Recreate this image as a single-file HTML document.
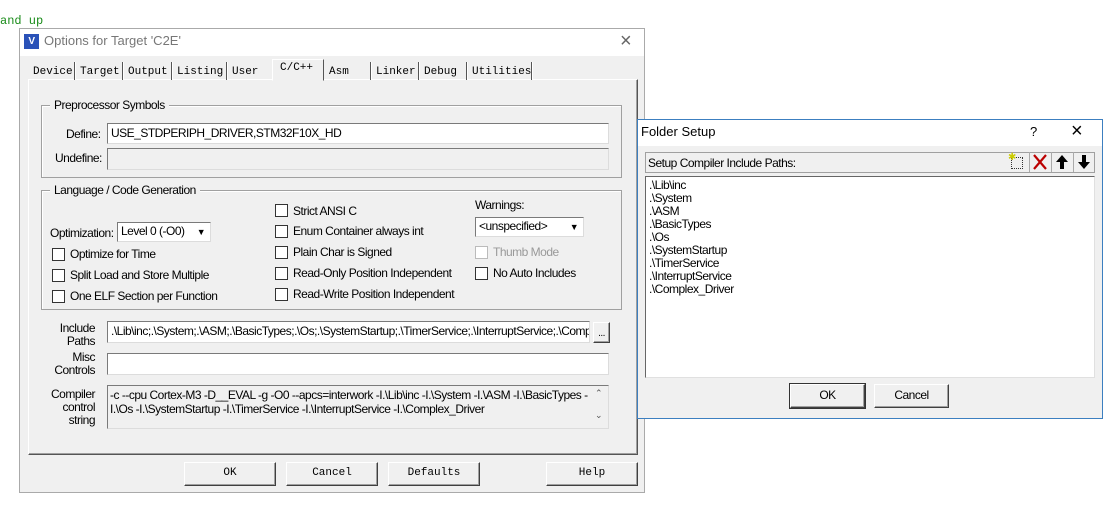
<!DOCTYPE html>
<html><head><meta charset="utf-8"><style>
*{box-sizing:border-box;margin:0;padding:0}
body{width:1116px;height:526px;background:#fff;position:relative;overflow:hidden;font-family:"Liberation Sans",sans-serif;font-size:12px;color:#000;letter-spacing:-0.5px}
.a{position:absolute;white-space:nowrap}
.mono{font-family:"Liberation Mono",monospace;font-size:11px;letter-spacing:0}
.in{position:absolute;background:#fff;border:1px solid #7a7a7a;border-right-color:#dcdcdc;border-bottom-color:#dcdcdc;padding:1px 3px;line-height:16px;overflow:hidden;white-space:nowrap}
.dis{background:#f0f0f0}
.grp{position:absolute;border:1px solid #a0a0a0;box-shadow:inset 1px 1px 0 #fff}
.gl{position:absolute;top:-8px;left:8px;background:#f0f0f0;padding:0 4px}
.cb{position:absolute;width:13px;height:13px;border:1px solid #333;background:#fff}
.btn{position:absolute;background:#f0f0f0;border:1px solid;border-color:#fff #404040 #404040 #fff;box-shadow:inset -1px -1px 0 #a0a0a0;text-align:center;line-height:21px}
.tab{position:absolute;top:62px;height:18px;line-height:20px;border-right:1px solid #555;box-shadow:1px 0 0 #fff;padding-left:4px}
</style></head><body>
<div class="a mono" style="left:0;top:14px;color:#1a8c1a;font-size:12px">and up</div>

<div class="a" style="left:19px;top:28px;width:626px;height:465px;background:#f0f0f0;border:1px solid #aaa"></div>
<div class="a" style="left:20px;top:29px;width:624px;height:27px;background:#fff"></div>
<div class="a" style="left:24px;top:34px;width:15px;height:15px;background:#2a52b8;color:#fff;font-size:10px;font-weight:bold;text-align:center;line-height:15px">V</div>
<div class="a" style="left:44px;top:33px;font-size:13px;color:#777;letter-spacing:0">Options for Target 'C2E'</div>
<div class="a" style="left:620px;top:30px;font-size:20px;color:#666;font-weight:200">×</div>

<div class="a" style="left:28px;top:79px;width:610px;height:376px;border:1px solid;border-color:#fff #555 #555 #fff;box-shadow:inset -1px -1px 0 #a0a0a0"></div>
<div class="tab mono" style="left:29px;width:46px">Device</div>
<div class="tab mono" style="left:76px;width:47px">Target</div>
<div class="tab mono" style="left:124px;width:48px">Output</div>
<div class="tab mono" style="left:173px;width:54px">Listing</div>
<div class="tab mono" style="left:228px;width:45px;border-right:none;box-shadow:none">User</div>
<div class="a mono" style="left:272px;top:59px;width:52px;height:22px;background:#f0f0f0;border:1px solid;border-color:#fff #555 transparent #fff;padding-left:7px;line-height:17px">C/C++</div>
<div class="tab mono" style="left:325px;width:46px">Asm</div>
<div class="tab mono" style="left:372px;width:47px">Linker</div>
<div class="tab mono" style="left:420px;width:47px">Debug</div>
<div class="tab mono" style="left:468px;width:64px">Utilities</div>

<div class="grp" style="left:41px;top:105px;width:581px;height:73px"><span class="gl">Preprocessor Symbols</span></div>
<div class="a" style="left:66px;top:127px">Define:</div>
<div class="in" style="left:107px;top:123px;width:502px;height:21px">USE_STDPERIPH_DRIVER,STM32F10X_HD</div>
<div class="a" style="left:55px;top:151px">Undefine:</div>
<div class="in dis" style="left:107px;top:148px;width:502px;height:22px"></div>

<div class="grp" style="left:41px;top:190px;width:581px;height:120px"><span class="gl">Language / Code Generation</span></div>
<div class="a" style="left:50px;top:226px">Optimization:</div>
<div class="in" style="left:117px;top:222px;width:94px;height:20px;padding-top:0">Level 0 (-O0)</div>
<div class="a" style="left:193px;top:224px;width:16px;height:16px;background:#fff;font-size:9px;text-align:center;line-height:16px">▼</div>
<div class="cb" style="left:52px;top:248px"></div><div class="a" style="left:70px;top:247px">Optimize for Time</div>
<div class="cb" style="left:52px;top:269px"></div><div class="a" style="left:70px;top:268px">Split Load and Store Multiple</div>
<div class="cb" style="left:52px;top:290px"></div><div class="a" style="left:70px;top:289px">One ELF Section per Function</div>

<div class="cb" style="left:275px;top:204px"></div><div class="a" style="left:293px;top:204px">Strict ANSI C</div>
<div class="cb" style="left:275px;top:225px"></div><div class="a" style="left:293px;top:224px">Enum Container always int</div>
<div class="cb" style="left:275px;top:246px"></div><div class="a" style="left:293px;top:245px">Plain Char is Signed</div>
<div class="cb" style="left:275px;top:267px"></div><div class="a" style="left:293px;top:266px">Read-Only Position Independent</div>
<div class="cb" style="left:275px;top:288px"></div><div class="a" style="left:293px;top:287px">Read-Write Position Independent</div>

<div class="a" style="left:475px;top:198px">Warnings:</div>
<div class="in" style="left:475px;top:217px;width:109px;height:20px;padding-top:0">&lt;unspecified&gt;</div>
<div class="a" style="left:566px;top:219px;width:16px;height:16px;background:#fff;font-size:9px;text-align:center;line-height:16px">▼</div>
<div class="cb" style="left:475px;top:246px;border-color:#bbb"></div><div class="a" style="left:493px;top:245px;color:#999">Thumb Mode</div>
<div class="cb" style="left:475px;top:267px"></div><div class="a" style="left:493px;top:266px">No Auto Includes</div>

<div class="a" style="left:58px;top:322px;text-align:right;width:37px;line-height:13px;white-space:normal">Include Paths</div>
<div class="in" style="left:107px;top:321px;width:483px;height:22px">.\Lib\inc;.\System;.\ASM;.\BasicTypes;.\Os;.\SystemStartup;.\TimerService;.\InterruptService;.\Complex_Driver</div>
<div class="btn" style="left:593px;top:322px;width:17px;height:21px;line-height:21px;font-size:10px">...</div>
<div class="a" style="left:50px;top:351px;text-align:right;width:45px;line-height:13px;white-space:normal">Misc Controls</div>
<div class="in" style="left:107px;top:353px;width:502px;height:22px"></div>
<div class="a" style="left:50px;top:388px;text-align:right;width:45px;line-height:13px;white-space:normal">Compiler control string</div>
<div class="in dis" style="left:107px;top:385px;width:502px;height:44px;line-height:14px;padding:2px 16px 0 2px">-c --cpu Cortex-M3 -D__EVAL -g -O0 --apcs=interwork -I.\Lib\inc -I.\System -I.\ASM -I.\BasicTypes -<br>I.\Os -I.\SystemStartup -I.\TimerService -I.\InterruptService -I.\Complex_Driver</div>
<div class="a" style="left:595px;top:388px;font-size:9px;color:#555">⌃</div>
<div class="a" style="left:595px;top:410px;font-size:9px;color:#555">⌄</div>

<div class="btn mono" style="left:184px;top:462px;width:92px;height:24px">OK</div>
<div class="btn mono" style="left:286px;top:462px;width:92px;height:24px">Cancel</div>
<div class="btn mono" style="left:388px;top:462px;width:92px;height:24px">Defaults</div>
<div class="btn mono" style="left:546px;top:462px;width:92px;height:24px">Help</div>

<div class="a" style="left:637px;top:119px;width:466px;height:300px;background:#f0f0f0;border:1px solid #3c7fc0"></div>
<div class="a" style="left:638px;top:120px;width:464px;height:26px;background:#fff"></div>
<div class="a" style="left:641px;top:124px;font-size:13px;letter-spacing:0">Folder Setup</div>
<div class="a" style="left:1030px;top:124px;font-size:13px">?</div>
<div class="a" style="left:1071px;top:120px;font-size:20px;font-weight:200">×</div>
<div class="a" style="left:645px;top:152px;width:450px;height:21px;border:1px solid #a0a0a0;background:#f0f0f0"></div>
<div class="a" style="left:648px;top:156px">Setup Compiler Include Paths:</div>
<div class="a" style="left:1011px;top:157px;width:12px;height:12px;border:1px dotted #333"></div>
<div class="a" style="left:1008px;top:152px;color:#cc0;font-size:10px">✱</div>
<div class="a" style="left:1029px;top:152px;width:1px;height:20px;background:#aaa"></div>
<svg class="a" style="left:1033px;top:154px" width="14" height="16"><path d="M1 1 L13 15 M13 1 L1 15" stroke="#b00" stroke-width="2.2"/></svg>
<div class="a" style="left:1051px;top:152px;width:1px;height:20px;background:#aaa"></div>
<svg class="a" style="left:1055px;top:154px" width="14" height="16"><path d="M7 1 L1 8 H5 V15 H9 V8 H13 Z" fill="#000"/></svg>
<div class="a" style="left:1073px;top:152px;width:1px;height:20px;background:#aaa"></div>
<svg class="a" style="left:1077px;top:154px" width="14" height="16"><path d="M7 15 L1 8 H5 V1 H9 V8 H13 Z" fill="#000"/></svg>
<div class="a" style="left:645px;top:176px;width:450px;height:202px;background:#fff;border:1px solid;border-color:#666 #e0e0e0 #e0e0e0 #666;padding:2px 3px;line-height:13px;white-space:normal">.\Lib\inc<br>.\System<br>.\ASM<br>.\BasicTypes<br>.\Os<br>.\SystemStartup<br>.\TimerService<br>.\InterruptService<br>.\Complex_Driver</div>
<div class="btn" style="left:790px;top:384px;width:75px;height:24px;outline:1px solid #333">OK</div>
<div class="btn" style="left:874px;top:384px;width:75px;height:24px">Cancel</div>
</body></html>
